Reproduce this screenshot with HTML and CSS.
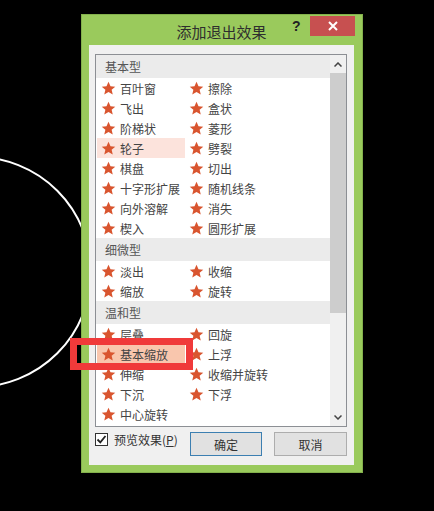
FILE: index.html
```html
<!DOCTYPE html>
<html>
<head>
    <title>添加退出效果</title>
    <link rel="stylesheet" href="styles.css">
</head>
<body>
    <!-- Shared star glyph for every effect row -->
    <svg class="defs" width="0" height="0">
        <symbol id="star" viewBox="0 0 24 24">
            <path d="M12 1.2l3.2 7.1 7.6.7-5.8 5.1 1.8 7.6L12 17.7l-6.8 4 1.8-7.6L1.2 9l7.6-.7z"/>
        </symbol>
    </svg>

    <!-- Slide shape behind the dialog -->
    <svg class="slide-circle" width="120" height="400" viewBox="0 0 120 400">
        <circle cx="-24" cy="272" r="115" fill="none" stroke="#fff" stroke-width="2"/>
    </svg>

    <div class="stage">
        <div class="dialog">
            <!-- Title bar -->
            <div class="title-bar">
                <span class="title">添加退出效果</span>
                <span class="help">?</span>
                <span class="close">
                    <svg width="12" height="12" viewBox="0 0 12 12">
                        <path d="M2 2l8 8M10 2l-8 8" stroke="#fff" stroke-width="2"/>
                    </svg>
                </span>
            </div>

            <div class="client">
                <!-- Effect list -->
                <div class="list">
                    <div class="items">
                        <div class="group">基本型</div>
                        <div class="row">
                            <div class="cell"><svg class="star"><use href="#star"/></svg>百叶窗</div>
                            <div class="cell"><svg class="star"><use href="#star"/></svg>擦除</div>
                        </div>
                        <div class="row">
                            <div class="cell"><svg class="star"><use href="#star"/></svg>飞出</div>
                            <div class="cell"><svg class="star"><use href="#star"/></svg>盒状</div>
                        </div>
                        <div class="row">
                            <div class="cell"><svg class="star"><use href="#star"/></svg>阶梯状</div>
                            <div class="cell"><svg class="star"><use href="#star"/></svg>菱形</div>
                        </div>
                        <div class="row">
                            <div class="cell hover"><svg class="star"><use href="#star"/></svg>轮子</div>
                            <div class="cell"><svg class="star"><use href="#star"/></svg>劈裂</div>
                        </div>
                        <div class="row">
                            <div class="cell"><svg class="star"><use href="#star"/></svg>棋盘</div>
                            <div class="cell"><svg class="star"><use href="#star"/></svg>切出</div>
                        </div>
                        <div class="row">
                            <div class="cell"><svg class="star"><use href="#star"/></svg>十字形扩展</div>
                            <div class="cell"><svg class="star"><use href="#star"/></svg>随机线条</div>
                        </div>
                        <div class="row">
                            <div class="cell"><svg class="star"><use href="#star"/></svg>向外溶解</div>
                            <div class="cell"><svg class="star"><use href="#star"/></svg>消失</div>
                        </div>
                        <div class="row">
                            <div class="cell"><svg class="star"><use href="#star"/></svg>楔入</div>
                            <div class="cell"><svg class="star"><use href="#star"/></svg>圆形扩展</div>
                        </div>

                        <div class="group">细微型</div>
                        <div class="row">
                            <div class="cell"><svg class="star"><use href="#star"/></svg>淡出</div>
                            <div class="cell"><svg class="star"><use href="#star"/></svg>收缩</div>
                        </div>
                        <div class="row">
                            <div class="cell"><svg class="star"><use href="#star"/></svg>缩放</div>
                            <div class="cell"><svg class="star"><use href="#star"/></svg>旋转</div>
                        </div>

                        <div class="group">温和型</div>
                        <div class="row">
                            <div class="cell"><svg class="star"><use href="#star"/></svg>层叠</div>
                            <div class="cell"><svg class="star"><use href="#star"/></svg>回旋</div>
                        </div>
                        <div class="row">
                            <div class="cell selected"><svg class="star"><use href="#star"/></svg>基本缩放</div>
                            <div class="cell"><svg class="star"><use href="#star"/></svg>上浮</div>
                        </div>
                        <div class="row">
                            <div class="cell"><svg class="star"><use href="#star"/></svg>伸缩</div>
                            <div class="cell"><svg class="star"><use href="#star"/></svg>收缩并旋转</div>
                        </div>
                        <div class="row">
                            <div class="cell"><svg class="star"><use href="#star"/></svg>下沉</div>
                            <div class="cell"><svg class="star"><use href="#star"/></svg>下浮</div>
                        </div>
                        <div class="row">
                            <div class="cell"><svg class="star"><use href="#star"/></svg>中心旋转</div>
                            <div class="cell"></div>
                        </div>
                    </div>

                    <!-- Vertical scrollbar -->
                    <div class="scrollbar">
                        <div class="arrow">
                            <svg width="8" height="5" viewBox="0 0 8 5"><path d="M0.5 4.5L4 1l3.5 3.5" fill="none" stroke="#444" stroke-width="1.5"/></svg>
                        </div>
                        <div class="thumb"></div>
                        <div class="track"></div>
                        <div class="arrow">
                            <svg width="8" height="5" viewBox="0 0 8 5"><path d="M0.5 0.5L4 4l3.5-3.5" fill="none" stroke="#444" stroke-width="1.5"/></svg>
                        </div>
                    </div>
                </div>

                <!-- Preview checkbox and buttons -->
                <div class="footer">
                    <label class="preview">
                        <span class="checkbox">
                            <svg width="11" height="11" viewBox="0 0 11 11"><path d="M1.5 5.5l2.8 2.8L9.5 2" fill="none" stroke="#222" stroke-width="1.8"/></svg>
                        </span>
                        <span>预览效果(<u>P</u>)</span>
                    </label>
                    <div class="buttons">
                        <button class="btn default">确定</button>
                        <button class="btn">取消</button>
                    </div>
                </div>
            </div>
        </div>
    </div>

    <!-- Annotation box drawn over the screenshot -->
    <div class="callout"></div>
</body>
</html>
```

FILE: styles.css
```css
/* Page */
body {
    margin: 0;
    width: 434px;
    height: 511px;
    background: #000;
    position: relative;
    overflow: hidden;
    font-family: "Noto Sans CJK SC", "Noto Sans", sans-serif;
    font-size: 12px;
    color: #444;
}

.defs {
    position: absolute;
}

/* Circle on the slide behind the dialog */
.slide-circle {
    position: absolute;
    left: 0;
    top: 0;
}

.stage {
    position: relative;
    padding: 14px 0 0 81px;
}

/* Dialog frame */
.dialog {
    width: 282px;
    box-sizing: border-box;
    background: #9aca5c;
    border: 1px solid #83b04c;
    padding: 0 8px 7px 7px;
}

.title-bar {
    height: 30px;
    display: flex;
    align-items: center;
    justify-content: center;
    position: relative;
}

.title {
    font-size: 15px;
    color: #2e2e2e;
    margin-top: 2px;
}

.help {
    position: absolute;
    left: 203px;
    top: 3px;
    font-family: "Liberation Sans", sans-serif;
    font-weight: bold;
    font-size: 14px;
    color: #222;
}

.close {
    position: absolute;
    right: -1px;
    top: 1px;
    width: 45px;
    height: 20px;
    background: #c75050;
    display: flex;
    align-items: center;
    justify-content: center;
}

/* Grey client area */
.client {
    background: #f0f0f0;
    padding: 9px 7px 9px 6px;
}

/* List box */
.list {
    height: 373px;
    box-sizing: border-box;
    border: 1px solid #8c8f94;
    background: #fff;
    display: flex;
}

.items {
    width: 234px;
    overflow: hidden;
}

.group {
    height: 23px;
    line-height: 23px;
    background: #ebebeb;
    padding-left: 9px;
    color: #555;
}

.row {
    display: grid;
    grid-template-columns: 88px 89px;
    margin-left: 1px;
}

.cell {
    height: 20px;
    display: flex;
    align-items: center;
    gap: 4px;
    padding-left: 4px;
    white-space: nowrap;
}

.cell.hover {
    background: #fce3dc;
}

.cell.selected {
    background: #f9c6ad;
}

.star {
    width: 15px;
    height: 15px;
    fill: #d9552f;
    flex: none;
}

/* Scrollbar */
.scrollbar {
    width: 16px;
    background: #f0f0f0;
    display: flex;
    flex-direction: column;
}

.arrow {
    height: 18px;
    display: flex;
    align-items: center;
    justify-content: center;
}

.thumb {
    height: 240px;
    background: #cdcdcd;
}

.track {
    flex: 1;
}

/* Footer */
.footer {
    margin-top: 5px;
    height: 24px;
    display: flex;
    justify-content: space-between;
    align-items: center;
}

.preview {
    display: flex;
    align-items: center;
    gap: 6px;
    color: #333;
    align-self: flex-start;
    margin-top: -1px;
}

.checkbox {
    width: 11px;
    height: 11px;
    border: 1px solid #333;
    background: #fff;
    display: flex;
}

.buttons {
    display: flex;
    gap: 12px;
}

.btn {
    width: 73px;
    height: 24px;
    font-family: "Noto Sans CJK SC", sans-serif;
    font-size: 12px;
    color: #333;
    background: #e1e1e1;
    border: 1px solid #adadad;
    padding: 0;
}

.btn.default {
    width: 72px;
    border-color: #3c7fb1;
}

/* Red highlight box laid over the screenshot */
.callout {
    position: absolute;
    left: 70px;
    top: 338px;
    width: 123px;
    height: 32px;
    box-sizing: border-box;
    border: 7px solid #f03a3a;
}
```
